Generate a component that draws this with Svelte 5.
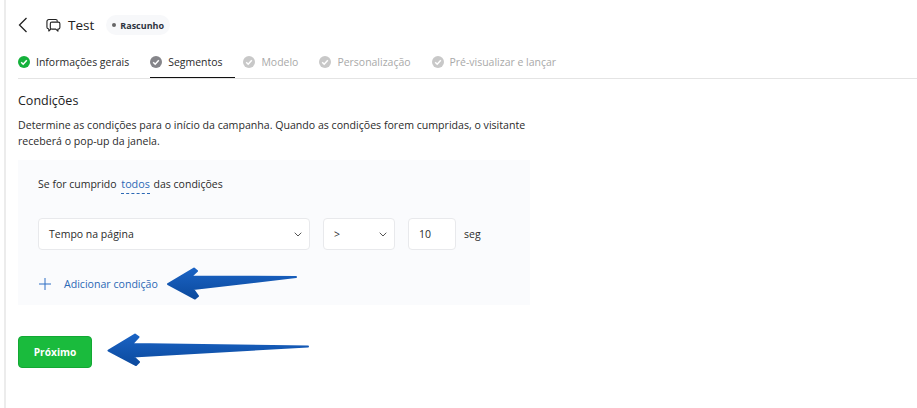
<script>
  const steps = [
    { label: "Informações gerais", state: "done" },
    { label: "Segmentos", state: "active" },
    { label: "Modelo", state: "off" },
    { label: "Personalização", state: "off" },
    { label: "Pré-visualizar e lançar", state: "off" },
  ];
</script>

{#snippet chevron()}
  <svg class="chev" width="8" height="5" viewBox="0 0 8 5" fill="none" stroke="#555" stroke-width="1">
    <path d="M.7 .7L4 4L7.300 .7" />
  </svg>
{/snippet}

<div class="page">
  <header class="top">
    <svg class="back" width="10" height="16" viewBox="0 0 10 16" fill="none" stroke="#222" stroke-width="1.3">
      <path d="M8.5 1L1.5 8l7 7" />
    </svg>
    <svg class="chat" width="15" height="15" viewBox="0 0 16 16" fill="none" stroke="#222" stroke-width="1.2" stroke-linejoin="round">
      <path d="M3 11.5H2.6A1.6 1.6 0 0 1 1 9.9V3.6A2 2 0 0 1 3 1.6h7.4A1.6 1.6 0 0 1 12 3.2V4" />
      <path d="M3 11.5v2.4l2.400-2.400" />
      <path d="M6.2 4.4h7a1.6 1.6 0 0 1 1.6 1.6v4.2a1.6 1.6 0 0 1-1.6 1.6h-.5v2.200l-2.300-2.200H6.200" />
      <path d="M6.2 4.4A1.6 1.6 0 0 0 4.6 6v4.2a1.6 1.6 0 0 0 1.6 1.6" />
    </svg>
    <h1>Test</h1>
    <span class="badge"><i></i>Rascunho</span>
  </header>

  <nav class="tabs">
    {#each steps as step}
      <div class="tab {step.state}">
        <svg width="12" height="12" viewBox="0 0 12 12">
          <circle cx="6" cy="6" r="6" class="dot" />
          <path d="M3.2 6.2l2 2 3.6-4" fill="none" stroke="#fff" stroke-width="1.5" />
        </svg>
        <span>{step.label}</span>
      </div>
    {/each}
  </nav>

  <main>
    <h2>Condições</h2>
    <p class="desc">
      Determine as condições para o início da campanha. Quando as condições forem cumpridas, o visitante receberá o pop-up da janela.
    </p>

    <section class="panel">
      <div class="rule">
        Se for cumprido <span class="link">todos</span> das condições
      </div>
      <div class="fields">
        <div class="field wide"><span>Tempo na página</span>{@render chevron()}</div>
        <div class="field op"><span>&gt;</span>{@render chevron()}</div>
        <div class="field num"><span>10</span></div>
        <span class="unit">seg</span>
      </div>
      <div class="add">
        <svg width="12" height="12" viewBox="0 0 12 12" stroke="#2f6fc4" stroke-width="1">
          <path d="M6 0v12M0 6h12" />
        </svg>
        <span>Adicionar condição</span>
      </div>
    </section>

    <button class="next">Próximo</button>
  </main>

  <svg class="arrows" width="917" height="408" viewBox="0 0 917 408">
    <defs>
      <linearGradient id="blue" x1="0" y1="0" x2="0" y2="1">
        <stop offset="0" stop-color="#1a63c4" />
        <stop offset="1" stop-color="#0c4a9e" />
      </linearGradient>
    </defs>
    <path fill="url(#blue)" stroke="url(#blue)" stroke-width="2" stroke-linejoin="round"
      d="M168 284L194 268.500L197 271L191 276.500L296 277L193 289L198 296L195 298.500Z" />
    <path fill="url(#blue)" stroke="url(#blue)" stroke-width="2" stroke-linejoin="round"
      d="M108.500 350.500L135 334.500L138.500 337L132 344L308 346.500L133 356.500L139 362L136 365Z" />
  </svg>
</div>

<style>
  :global(body) {
    margin: 0;
    background: #fff;
  }

  .page {
    position: relative;
    width: 913px;
    height: 408px;
    box-sizing: border-box;
    border-left: 2px solid #ececec;
    margin-left: 4px;
    overflow: hidden;
    font-family: "Open Sans", "Noto Sans", sans-serif;
    color: #2b2b2b;
    font-size: 11px;
  }

  .top {
    display: flex;
    align-items: center;
    height: 20px;
    padding: 15px 0 0 12px;
  }
  .back {
    margin-right: 18px;
  }
  .chat {
    margin-right: 7px;
  }
  h1 {
    margin: 0 12px 0 0;
    font-size: 13.500px;
    font-weight: 400;
    color: #222;
  }
  .badge {
    display: flex;
    align-items: center;
    gap: 4px;
    height: 20px;
    padding: 0 6px;
    border-radius: 10px;
    background: #f7f8fa;
    font-size: 9px;
    font-weight: 700;
    color: #2e3440;
  }
  .badge i {
    width: 4px;
    height: 4px;
    border-radius: 50%;
    background: #666;
  }

  .tabs {
    display: flex;
    gap: 21px;
    height: 44px;
    margin: 0 0 0 12px;
    box-sizing: border-box;
    border-bottom: 1px solid #e4e4e4;
    padding-top: 20px;
  }
  .tab {
    display: flex;
    align-items: flex-start;
    gap: 6px;
    height: 23px;
    box-sizing: border-box;
    font-size: 10.470px;
    line-height: 14px;
  }
  .tab svg {
    margin-top: 1px;
  }
  .tab.active {
    border-bottom: 1px solid #111;
    padding-right: 13px;
    margin-right: -13px;
  }
  .done .dot {
    fill: #14b13b;
  }
  .active .dot {
    fill: #85858a;
  }
  .off .dot {
    fill: #c8c8c8;
  }
  .off span {
    color: #a9a9a9;
  }

  main {
    padding: 12px 0 0 12px;
  }
  h2 {
    margin: 0;
    font-size: 12.500px;
    line-height: 20px;
    font-weight: 400;
    color: #222;
  }
  .desc {
    width: 515px;
    margin: 6px 0 0;
    font-size: 10.600px;
    line-height: 16px;
    color: #2b2b2b;
  }

  .panel {
    width: 472px;
    height: 145px;
    margin-top: 11px;
    padding: 0 20px;
    background: #fafbfd;
  }
  .rule {
    padding-top: 17px;
    line-height: 14px;
    font-size: 10.500px;
  }
  .link {
    margin: 0 1px 0 2px;
    padding-bottom: 2px;
    font-size: 10.800px;
    color: #2b68b5;
    border-bottom: 1px dashed #2b68b5;
  }
  .fields {
    display: flex;
    align-items: center;
    margin-top: 27px;
  }
  .field {
    display: flex;
    align-items: center;
    justify-content: space-between;
    height: 32px;
    box-sizing: border-box;
    padding: 0 7px 0 10px;
    background: #fff;
    border: 1px solid #e8e9ec;
    border-radius: 4px;
    font-size: 10.500px;
  }
  .wide {
    width: 272px;
    margin-right: 13px;
  }
  .op {
    width: 72px;
    margin-right: 13px;
  }
  .num {
    width: 48px;
    margin-right: 8px;
    padding-left: 10px;
  }
  .unit {
    font-size: 10.500px;
  }
  .add {
    display: flex;
    align-items: center;
    gap: 13px;
    margin: 27px 0 0 1px;
    font-size: 10.600px;
    color: #2b68b5;
  }

  .next {
    display: block;
    width: 74px;
    height: 32px;
    margin-top: 31px;
    padding: 0;
    border: 1px solid #12a833;
    border-radius: 4px;
    background: #1abb3d;
    color: #fff;
    font: 700 10.200px "Open Sans", "Noto Sans", sans-serif;
  }

  .arrows {
    position: absolute;
    top: 0;
    left: -6px;
    pointer-events: none;
  }
</style>
